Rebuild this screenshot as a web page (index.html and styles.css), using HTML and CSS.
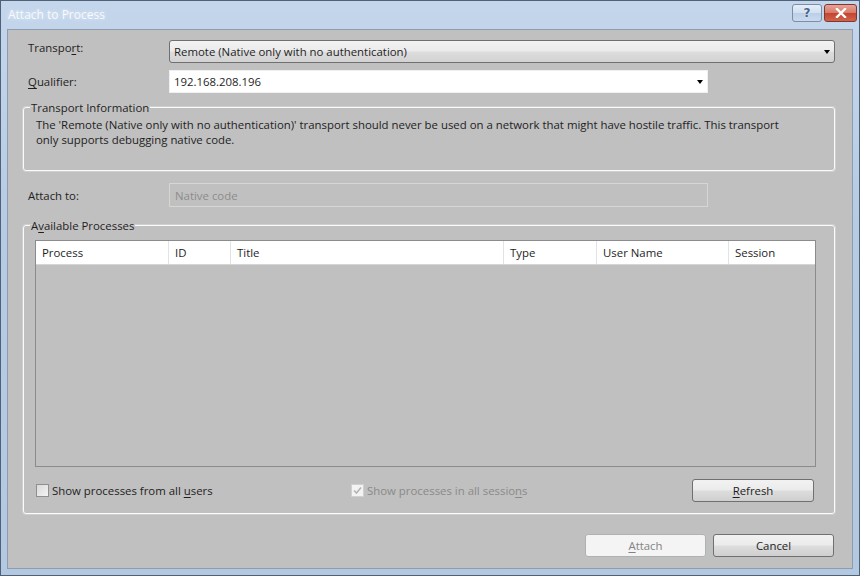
FILE: index.html
```html
<!DOCTYPE html>
<html lang="en">

<head>
  <meta charset="UTF-8" />
  <title>Attach to Process</title>
  <link rel="stylesheet" href="styles.css">
</head>

<body>
  <div class="window">
    <div class="titlebar">
      <span class="title">Attach to Process</span>
      <div class="caption-buttons">
        <span class="cap-btn help">?</span>
        <span class="cap-btn close">
          <svg width="12" height="10" viewBox="0 0 12 10">
            <path d="M2 1 L10 9 M10 1 L2 9" stroke="#fff" stroke-width="2.4" stroke-linecap="square" fill="none"/>
          </svg>
        </span>
      </div>
    </div>

    <div class="client">
      <div class="field-row row-transport">
        <span class="field-label">Transpo<u>r</u>t:</span>
        <div class="combo combo-drop">
          <span>Remote (Native only with no authentication)</span>
          <span class="arrow"></span>
        </div>
      </div>

      <div class="field-row row-qualifier">
        <span class="field-label"><u>Q</u>ualifier:</span>
        <div class="combo combo-edit">
          <span>192.168.208.196</span>
          <span class="arrow"></span>
        </div>
      </div>

      <fieldset class="group group-info">
        <legend>Transport Information</legend>
        <p class="group-text">The 'Remote (Native only with no authentication)' transport should never be used on a network that might have hostile traffic. This transport<br>only supports debugging native code.</p>
      </fieldset>

      <div class="field-row row-attach">
        <span class="field-label">Attach to:</span>
        <div class="textbox disabled">Native code</div>
      </div>

      <fieldset class="group group-processes">
        <legend>A<u>v</u>ailable Processes</legend>
        <div class="group-body">
          <div class="process-list">
            <div class="list-header">
              <span>Process</span>
              <span>ID</span>
              <span>Title</span>
              <span>Type</span>
              <span>User Name</span>
              <span>Session</span>
            </div>
          </div>

          <div class="list-options">
            <label class="check check-users">
              <span class="check-box"></span>
              <span>Show processes from all <u>u</u>sers</span>
            </label>
            <label class="check check-sessions disabled">
              <span class="check-box">
                <svg width="9" height="9" viewBox="0 0 9 9">
                  <path d="M1 4.5 L3.5 7 L8 1.5" stroke="#b4b4b4" stroke-width="1.6" fill="none"/>
                </svg>
              </span>
              <span>Show processes in all sessio<u>n</u>s</span>
            </label>
            <button class="btn btn-refresh"><u>R</u>efresh</button>
          </div>
        </div>
      </fieldset>

      <div class="dialog-buttons">
        <button class="btn disabled"><u>A</u>ttach</button>
        <button class="btn">Cancel</button>
      </div>
    </div>
  </div>
</body>

</html>
```

FILE: styles.css
```css
body {
  margin: 0;
  padding: 0;
  font-family: 'Open Sans', 'Noto Sans', sans-serif;
  font-size: 11.4px;
  line-height: 15px;
  color: #1e1e1e;
  background: #c0c0c0;
}

u {
  text-decoration-thickness: 1px;
  text-underline-offset: 2px;
}

.window {
  width: 860px;
  height: 576px;
  box-sizing: border-box;
  border: 1px solid #4f6177;
  background: linear-gradient(180deg, #c4d6ec 0%, #b6cbe4 40%, #b3c8e1 100%);
  display: flex;
  flex-direction: column;
}

/* title bar */
.titlebar {
  height: 29px;
  display: flex;
  align-items: flex-start;
  justify-content: space-between;
  padding-left: 7px;
}

.title {
  margin-top: 6px;
  font-size: 12px;
  color: #f6f9fd;
  text-shadow: 0 0 4px rgba(255,255,255,0.7);
}

.caption-buttons {
  display: flex;
  gap: 2px;
  margin-top: 3px;
  margin-right: 2px;
}

.cap-btn {
  height: 18px;
  display: flex;
  align-items: center;
  justify-content: center;
  border: 1px solid #7d8ea4;
  border-radius: 3px;
  box-sizing: border-box;
}

.cap-btn.help {
  width: 30px;
  background: linear-gradient(180deg, #e6eef8 0%, #d2e0f0 48%, #bccfe6 52%, #c8daef 100%);
  color: #46658f;
  font-family: 'DejaVu Sans', sans-serif;
  font-weight: bold;
  font-size: 12px;
  text-shadow: 0 0 2px #fff;
}

.cap-btn.close {
  width: 33px;
  border-color: #7a3a33;
  background: linear-gradient(180deg, #e8a497 0%, #d87a68 48%, #c4442f 52%, #d0644c 100%);
}

/* client area */
.client {
  flex: 1;
  margin: 0 7px 7px 7px;
  background: #c0c0c0;
  box-shadow: 0 0 0 1px #8e9cad;
  padding: 0 17px 0 15px;
}

.field-row {
  display: flex;
  align-items: center;
}

.field-label {
  width: 146px;
  padding-left: 5px;
  box-sizing: border-box;
}

.row-transport {
  margin-top: 10px;
}

.row-transport .field-label {
  align-self: flex-start;
}

.row-qualifier {
  margin-top: 7px;
}

.row-attach {
  margin-top: 12px;
}

.combo {
  height: 23px;
  box-sizing: border-box;
  display: flex;
  align-items: center;
  justify-content: space-between;
  padding: 0 4px 0 4px;
}

.combo-drop {
  flex: 1;
  border: 1px solid #707070;
  border-radius: 3px;
  background: linear-gradient(180deg, #f3f3f3 0%, #ebebeb 48%, #dddddd 52%, #d2d2d2 100%);
}

.combo-edit {
  width: 539px;
  background: #fff;
  border: 1px solid #f0f0f0;
}

.arrow {
  width: 0;
  height: 0;
  border-left: 3.5px solid transparent;
  border-right: 3.5px solid transparent;
  border-top: 4px solid #000;
}

.textbox {
  width: 539px;
  height: 24px;
  box-sizing: border-box;
  padding: 0 5px;
  display: flex;
  align-items: center;
}

.textbox.disabled {
  border: 1px solid #d6d6d6;
  background: #c0c0c0;
  color: #8c8c8c;
}

/* group boxes */
.group {
  margin: 0;
  padding: 0;
  min-width: 0;
  border: 1px solid #fbfbfb;
  border-radius: 3px;
  box-shadow: 0 0 0 1px #cfcfcf;
}

.group legend {
  margin-left: 6px;
  padding: 0 1px;
}

.group-info {
  margin-top: 7px;
}

.group-text {
  margin: 0;
  padding: 2px 12px 23px 12px;
}

.group-processes {
  margin-top: 11px;
}

.group-body {
  padding: 7px 18px 11px 11px;
}

.process-list {
  height: 227px;
  box-sizing: border-box;
  border: 1px solid #8b8b8b;
  background: #c0c0c0;
}

.list-header {
  display: grid;
  grid-template-columns: 133px 62px 273px 93px 132px 1fr;
  height: 23px;
  background: #fff;
  border-bottom: 1px solid #d5d5d5;
}

.list-header span {
  display: flex;
  align-items: center;
  padding-left: 6px;
  border-right: 1px solid #e3e3e3;
}

.list-header span:last-child {
  border-right: none;
}

.list-options {
  display: flex;
  align-items: center;
  margin-top: 12px;
  padding: 0 2px 0 1px;
}

.check {
  display: flex;
  align-items: center;
  gap: 3px;
}

.check-users {
  width: 315px;
}

.check.disabled {
  color: #8a8a8a;
}

.check-box {
  width: 13px;
  height: 13px;
  box-sizing: border-box;
  border: 1px solid #8e8f8f;
  background: linear-gradient(135deg, #d9d9d9 0%, #f4f4f4 100%);
  display: flex;
  align-items: center;
  justify-content: center;
}

.check.disabled .check-box {
  border-color: #d0d0d0;
  background: #f3f3f3;
}

/* buttons */
.btn {
  width: 121px;
  height: 23px;
  border: 1px solid #707070;
  border-radius: 3px;
  background: linear-gradient(180deg, #f2f2f2 0%, #ebebeb 48%, #dddddd 52%, #cfcfcf 100%);
  font-family: inherit;
  font-size: 11.4px;
  color: #1e1e1e;
  padding: 0;
}

.btn.disabled {
  background: #f4f4f4;
  border-color: #adb2b5;
  color: #838383;
}

.btn-refresh {
  margin-left: auto;
  width: 122px;
}

.dialog-buttons {
  display: flex;
  justify-content: flex-end;
  gap: 7px;
  margin-top: 20px;
  margin-right: 1px;
}
```
